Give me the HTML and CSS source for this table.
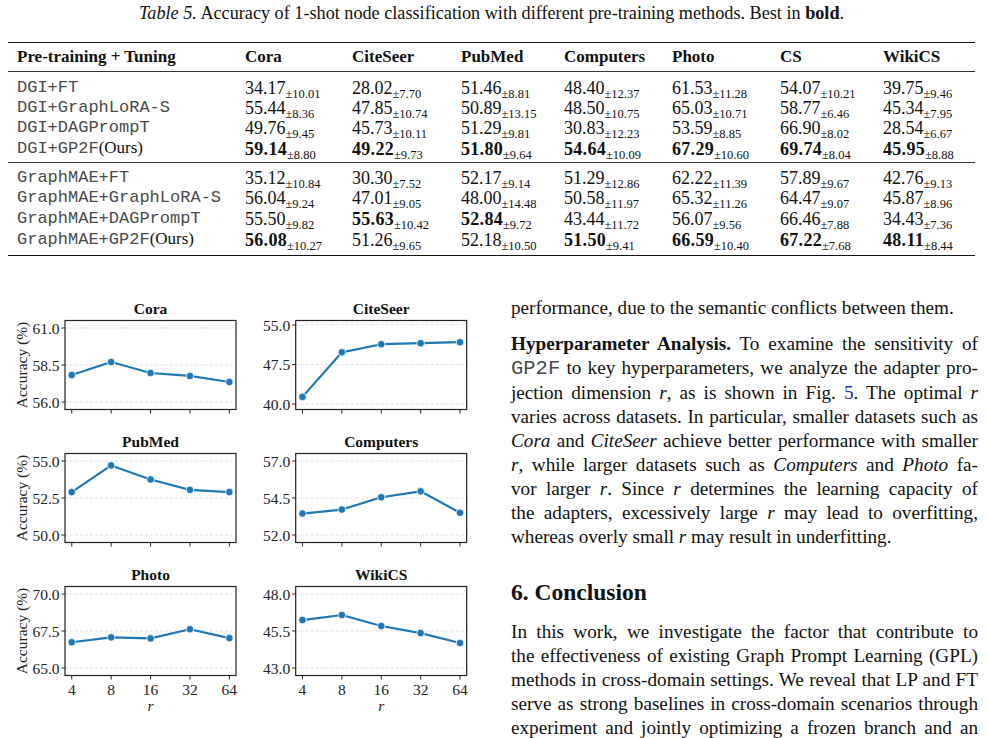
FILE: index.html
```html
<!DOCTYPE html>
<html lang="en">
<head>
<meta charset="utf-8">
<title>Table 5 - 1-shot node classification</title>
<link rel="stylesheet" href="styles.css">
</head>
<body>
<div class="page">
	<p class="caption"><i>Table 5.</i> Accuracy of 1-shot node classification with different pre-training methods. Best in <b>bold</b>.</p>

	<table class="results">
		<colgroup>
			<col style="width:237px"><col style="width:107px"><col style="width:109px"><col style="width:103px">
			<col style="width:108px"><col style="width:108px"><col style="width:103px"><col style="width:92px">
		</colgroup>
		<thead>
			<tr>
				<th>Pre-training + Tuning</th><th>Cora</th><th>CiteSeer</th><th>PubMed</th>
				<th>Computers</th><th>Photo</th><th>CS</th><th>WikiCS</th>
			</tr>
		</thead>
		<tbody class="block-a">
			<tr>
				<td>DGI+FT</td><td>34.17<sub>±10.01</sub></td><td>28.02<sub>±7.70</sub></td><td>51.46<sub>±8.81</sub></td>
				<td>48.40<sub>±12.37</sub></td><td>61.53<sub>±11.28</sub></td><td>54.07<sub>±10.21</sub></td><td>39.75<sub>±9.46</sub></td>
			</tr>
			<tr>
				<td>DGI+GraphLoRA-S</td><td>55.44<sub>±8.36</sub></td><td>47.85<sub>±10.74</sub></td><td>50.89<sub>±13.15</sub></td>
				<td>48.50<sub>±10.75</sub></td><td>65.03<sub>±10.71</sub></td><td>58.77<sub>±6.46</sub></td><td>45.34<sub>±7.95</sub></td>
			</tr>
			<tr>
				<td>DGI+DAGPrompT</td><td>49.76<sub>±9.45</sub></td><td>45.73<sub>±10.11</sub></td><td>51.29<sub>±9.81</sub></td>
				<td>30.83<sub>±12.23</sub></td><td>53.59<sub>±8.85</sub></td><td>66.90<sub>±8.02</sub></td><td>28.54<sub>±6.67</sub></td>
			</tr>
			<tr>
				<td>DGI+GP2F<span class="ours">(Ours)</span></td><td><b>59.14</b><sub>±8.80</sub></td><td><b>49.22</b><sub>±9.73</sub></td><td><b>51.80</b><sub>±9.64</sub></td>
				<td><b>54.64</b><sub>±10.09</sub></td><td><b>67.29</b><sub>±10.60</sub></td><td><b>69.74</b><sub>±8.04</sub></td><td><b>45.95</b><sub>±8.88</sub></td>
			</tr>
		</tbody>
		<tbody class="block-b">
			<tr>
				<td>GraphMAE+FT</td><td>35.12<sub>±10.84</sub></td><td>30.30<sub>±7.52</sub></td><td>52.17<sub>±9.14</sub></td>
				<td>51.29<sub>±12.86</sub></td><td>62.22<sub>±11.39</sub></td><td>57.89<sub>±9.67</sub></td><td>42.76<sub>±9.13</sub></td>
			</tr>
			<tr>
				<td>GraphMAE+GraphLoRA-S</td><td>56.04<sub>±9.24</sub></td><td>47.01<sub>±9.05</sub></td><td>48.00<sub>±14.48</sub></td>
				<td>50.58<sub>±11.97</sub></td><td>65.32<sub>±11.26</sub></td><td>64.47<sub>±9.07</sub></td><td>45.87<sub>±8.96</sub></td>
			</tr>
			<tr>
				<td>GraphMAE+DAGPrompT</td><td>55.50<sub>±9.82</sub></td><td><b>55.63</b><sub>±10.42</sub></td><td><b>52.84</b><sub>±9.72</sub></td>
				<td>43.44<sub>±11.72</sub></td><td>56.07<sub>±9.56</sub></td><td>66.46<sub>±7.88</sub></td><td>34.43<sub>±7.36</sub></td>
			</tr>
			<tr>
				<td>GraphMAE+GP2F<span class="ours">(Ours)</span></td><td><b>56.08</b><sub>±10.27</sub></td><td>51.26<sub>±9.65</sub></td><td>52.18<sub>±10.50</sub></td>
				<td><b>51.50</b><sub>±9.41</sub></td><td><b>66.59</b><sub>±10.40</sub></td><td><b>67.22</b><sub>±7.68</sub></td><td><b>48.11</b><sub>±8.44</sub></td>
			</tr>
		</tbody>
	</table>

	<div class="lower">
		<div class="figure" id="figure"></div>

		<div class="text">
			<p class="para-end">performance, due to the semantic conflicts between them.</p>

			<p class="para">
				<span class="ln"><b>Hyperparameter Analysis.</b> To examine the sensitivity of</span>
				<span class="ln"><span class="mono">GP2F</span> to key hyperparameters, we analyze the adapter pro-</span>
				<span class="ln">jection dimension <i>r</i>, as is shown in Fig. <span class="ref">5</span>. The optimal <i>r</i></span>
				<span class="ln">varies across datasets. In particular, smaller datasets such as</span>
				<span class="ln"><i>Cora</i> and <i>CiteSeer</i> achieve better performance with smaller</span>
				<span class="ln"><i>r</i>, while larger datasets such as <i>Computers</i> and <i>Photo</i> fa-</span>
				<span class="ln">vor larger <i>r</i>. Since <i>r</i> determines the learning capacity of</span>
				<span class="ln">the adapters, excessively large <i>r</i> may lead to overfitting,</span>
				whereas overly small <i>r</i> may result in underfitting.
			</p>

			<h2 class="section">6. Conclusion</h2>

			<p class="para">
				<span class="ln">In this work, we investigate the factor that contribute to</span>
				<span class="ln">the effectiveness of existing Graph Prompt Learning (GPL)</span>
				<span class="ln">methods in cross-domain settings. We reveal that LP and FT</span>
				<span class="ln">serve as strong baselines in cross-domain scenarios through</span>
				<span class="ln">experiment and jointly optimizing a frozen branch and an</span>
			</p>
		</div>
	</div>
</div>
<script>
	// accuracy vs adapter projection dimension r
	var charts = [
		{ name: "Cora",      hi: 61, lo: 56, vals: [57.82, 58.70, 57.96, 57.76, 57.35] },
		{ name: "CiteSeer",  hi: 55, lo: 40, vals: [41.35, 49.81, 51.35, 51.54, 51.73], ty: [29, 108] },
		{ name: "PubMed",    hi: 55, lo: 50, vals: [52.90, 54.70, 53.75, 53.05, 52.90] },
		{ name: "Computers", hi: 57, lo: 52, vals: [53.45, 53.72, 54.55, 54.95, 53.50] },
		{ name: "Photo",     hi: 70, lo: 65, vals: [66.74, 67.07, 67.00, 67.62, 67.02] },
		{ name: "WikiCS",    hi: 48, lo: 43, vals: [46.24, 46.58, 45.84, 45.36, 44.69] }
	];
	var rs = [4, 8, 16, 32, 64];
	var BOX_W = 171, BOX_T = 24.5, BOX_B = 113.5;

	function drawChart(c, i) {
		var left = i % 2 === 0;
		var bottomRow = i >= 4;
		var bx = left ? 57 : 47.7;
		var w = left ? 240 : 232;
		var h = bottomRow ? 160 : 133;
		var y0 = c.ty ? c.ty[0] : 32, y1 = c.ty ? c.ty[1] : 106;

		function yOf(v) { return y0 + (c.hi - v) / (c.hi - c.lo) * (y1 - y0); }
		function xOf(k) { return bx + 6.75 + k * 39.4; }

		var s = '<svg class="chart" width="' + w + '" height="' + h + '" viewBox="0 0 ' + w + ' ' + h + '">';
		var mid = (c.hi + c.lo) / 2;

		[c.hi, mid, c.lo].forEach(function(v) {
			var y = yOf(v);
			s += '<line class="grid" x1="' + bx + '" x2="' + (bx + BOX_W) + '" y1="' + y + '" y2="' + y + '"/>';
			s += '<line class="tick" x1="' + (bx - 3.5) + '" x2="' + bx + '" y1="' + y + '" y2="' + y + '"/>';
			s += '<text class="ytick" x="' + (bx - 5.5) + '" y="' + (y + 5.5) + '">' + v.toFixed(1) + '</text>';
		});

		var pts = c.vals.map(function(v, k) { return xOf(k) + ',' + yOf(v); }).join(' ');
		s += '<polyline class="series" points="' + pts + '"/>';
		c.vals.forEach(function(v, k) {
			s += '<circle class="dot" cx="' + xOf(k) + '" cy="' + yOf(v) + '" r="3.8"/>';
		});

		s += '<rect class="frame" x="' + bx + '" y="' + BOX_T + '" width="' + BOX_W + '" height="' + (BOX_B - BOX_T) + '"/>';

		rs.forEach(function(r, k) {
			s += '<line class="tick" x1="' + xOf(k) + '" x2="' + xOf(k) + '" y1="' + BOX_B + '" y2="' + (BOX_B + 4) + '"/>';
			if (bottomRow) {
				s += '<text class="xtick" x="' + xOf(k) + '" y="133">' + r + '</text>';
			}
		});
		if (bottomRow) {
			s += '<text class="xlabel" x="' + (bx + BOX_W / 2) + '" y="149">r</text>';
		}

		s += '<text class="title" x="' + (bx + BOX_W / 2) + '" y="18">' + c.name + '</text>';
		if (left) {
			s += '<text class="ylabel" transform="translate(19,69) rotate(-90)">Accuracy (%)</text>';
		}
		return s + '</svg>';
	}

	var fig = document.getElementById("figure");
	charts.forEach(function(c, i) {
		var panel = document.createElement("div");
		panel.className = "panel";
		panel.innerHTML = drawChart(c, i);
		fig.appendChild(panel);
	});
</script>
</body>
</html>
```

FILE: styles.css
```css
html, body {
	overflow: hidden;
}

body {
	margin: 0;
	background: #fff;
	color: #111;
	font-family: "Liberation Serif", "Times New Roman", serif;
}

.page {
	padding: 3px 13px 0 8px;
}

.caption {
	margin: 0 0 19px;
	font-size: 18.2px;
	line-height: 20px;
	text-align: center;
}

/* results table, booktabs style */
.results {
	width: 967px;
	table-layout: fixed;
	border-collapse: collapse;
	border-top: 1.5px solid #111;
	border-bottom: 1.5px solid #111;
	font-size: 17px;
}

.results th {
	padding: 0;
	line-height: 28px;
	text-align: left;
	font-weight: bold;
	border-bottom: 1px solid #333;
}

.results th:first-child,
.results td:first-child {
	padding-left: 9px;
}

.results td {
	padding: 0;
	line-height: 20.3px;
	white-space: nowrap;
}

.results td:first-child {
	font-family: "Liberation Mono", "Courier New", monospace;
	font-size: 17px;
	color: #4a4a4a;
}

.results td + td {
	font-size: 18px;
}

.results td b {
	letter-spacing: 0.3px;
}

.results sub {
	font-size: 12.5px;
	line-height: 0;
	vertical-align: -4px;
	letter-spacing: 0;
}

.results .ours {
	font-family: "Liberation Serif", serif;
	color: #111;
}

.results tbody tr:first-child td {
	padding-top: 5.5px;
}

.block-a tr:last-child td {
	padding-bottom: 2px;
}

.block-b {
	border-top: 1px solid #333;
}

.block-b tr:last-child td {
	padding-bottom: 5px;
}

/* figure + text columns */
.lower {
	display: grid;
	grid-template-columns: 472px 467px;
	column-gap: 31px;
	margin-top: 40px;
}

.figure {
	display: grid;
	grid-template-columns: 240px 232px;
	grid-template-rows: 133px 133px auto;
}

.panel svg {
	display: block;
	overflow: visible;
}

.chart text {
	font-family: "Liberation Serif", serif;
	font-size: 15.5px;
	fill: #222;
}

.chart .title {
	font-size: 15.5px;
	font-weight: bold;
	text-anchor: middle;
	fill: #111;
}

.chart .ytick {
	text-anchor: end;
}

.chart .xtick,
.chart .ylabel {
	text-anchor: middle;
}

.chart .xlabel {
	font-style: italic;
	text-anchor: middle;
}

.grid {
	stroke: #d8d8d8;
	stroke-width: 0.8;
	stroke-dasharray: 3 2;
}

.tick {
	stroke: #222;
	stroke-width: 1;
}

.frame {
	fill: none;
	stroke: #222;
	stroke-width: 1.2;
}

.series {
	fill: none;
	stroke: #1f77b4;
	stroke-width: 2.2;
	stroke-linejoin: round;
}

.dot {
	fill: #1f77b4;
	stroke: #fff;
	stroke-width: 0.8;
}

.text {
	font-size: 19.2px;
	line-height: 24px;
}

.text p {
	margin: 0;
}

.para-end {
	margin-bottom: 12px !important;
}

.ln {
	display: block;
	white-space: nowrap;
	text-align: justify;
	text-align-last: justify;
}

.mono {
	font-family: "Liberation Mono", "Courier New", monospace;
	font-size: 20.5px;
	color: #4a4a4a;
}

.ref {
	color: #2b2b9c;
}

.section {
	margin: 29px 0 14px;
	font-size: 23.5px;
	line-height: 28px;
	font-weight: bold;
}
```
